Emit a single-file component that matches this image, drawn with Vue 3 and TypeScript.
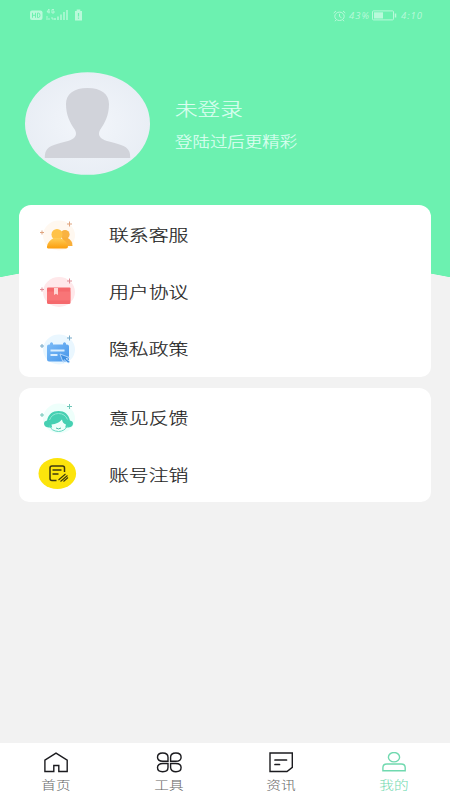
<script setup lang="ts">
interface MenuItem {
  label: string
  icon: 'service' | 'terms' | 'privacy' | 'feedback' | 'cancel'
}
interface Tab {
  label: string
  icon: 'home' | 'tools' | 'news' | 'me'
}

const groups: MenuItem[][] = [
  [
    { label: '联系客服', icon: 'service' },
    { label: '用户协议', icon: 'terms' },
    { label: '隐私政策', icon: 'privacy' },
  ],
  [
    { label: '意见反馈', icon: 'feedback' },
    { label: '账号注销', icon: 'cancel' },
  ],
]
const tabs: Tab[] = [
  { label: '首页', icon: 'home' },
  { label: '工具', icon: 'tools' },
  { label: '资讯', icon: 'news' },
  { label: '我的', icon: 'me' },
]
const active = 'me'
</script>

<template>
  <div class="screen">
    <header class="status">
      <svg class="status-left" width="56" height="14" viewBox="0 0 56 14">
        <rect x="0" y="2.500" width="12.500" height="9.500" rx="2" fill="currentColor" />
        <path d="M2.500 4.800v5M5.500 4.800v5M2.500 7.300h3M7.500 5v4.600h.8q1.700 0 1.700-2.300T8.300 5z" fill="none" stroke="#6cf1b0" />
        <path d="M19 1l-2 3h3M19 1v4.500M24 1.500h-2v3.500h2v-2h-1M17 8v4M19 10v2M21 10h2v2" fill="none" stroke="currentColor" stroke-width=".9" />
        <path d="M25 12v-2M28 12V8.500M31 12V6.500M34 12V4M37 12V2" stroke="currentColor" stroke-width="1.400" />
        <path d="M45 3h1.700V1.500h3.600V3H52v9.500h-7z" fill="currentColor" />
        <path d="M48.500 5v3.500M48.500 9.500v1.200" stroke="#6cf1b0" stroke-width="1.200" />
      </svg>
      <div class="status-right">
        <svg width="13" height="12" viewBox="0 0 13 12" fill="none" stroke="currentColor">
          <ellipse cx="6.500" cy="6.300" rx="4.700" ry="4.200" />
          <path d="M6.500 3.800v2.700l2 1.200M.7 3l2.300-2M12.300 3L10 1M3 10l-1 1.200M10 10l1 1.200" />
        </svg>
        <span class="pct">43%</span>
        <svg class="battery" width="25" height="11" viewBox="0 0 25 11">
          <rect x=".5" y=".9" width="21" height="9" rx="1" fill="none" stroke="currentColor" />
          <rect x="2" y="2.300" width="9" height="6.200" fill="currentColor" />
          <path d="M23.500 3.500v4" stroke="currentColor" stroke-width="1.500" />
        </svg>
        <span class="clock">4:10</span>
      </div>
    </header>

    <section class="profile">
      <svg class="avatar" width="125" height="103" viewBox="0 0 125 103">
        <defs>
          <radialGradient id="avatarBg">
            <stop offset="0" stop-color="#f3f6fb" />
            <stop offset="1" stop-color="#e9eef5" />
          </radialGradient>
        </defs>
        <ellipse cx="62.500" cy="51.500" rx="62.500" ry="51.300" fill="url(#avatarBg)" />
        <path d="M62.500 16C49 16 41 22 41 32c0 11 4 19 9 26 3 6-1 9-7 11-11 3-19 4-22 10-1 2-1.200 4-1.200 7h85.400c0-3-.2-5-1.200-7-3-6-11-7-22-10-6-2-10-5-7-11 5-7 9-15 9-26 0-10-8-16-21.500-16z" fill="#d1d3da" />
      </svg>
      <div class="who">
        <h1 class="wide">未登录</h1>
        <p class="wide">登陆过后更精彩</p>
      </div>
    </section>

    <main class="groups">
      <ul v-for="(group, i) in groups" :key="i" class="card">
        <li v-for="item in group" :key="item.label" class="row">
          <svg v-if="item.icon === 'service'" width="44" height="36" viewBox="0 -2.500 44 36">
            <defs>
              <linearGradient id="people" x2="0" y2="1"><stop stop-color="#ffce58" /><stop offset="1" stop-color="#fb9d0d" /></linearGradient>
            </defs>
            <ellipse cx="24" cy="17" rx="16" ry="15" fill="#fff8f0" />
            <circle cx="30" cy="16" r="4.600" fill="#f9b241" />
            <path d="M27 19h5q6 3 5.500 8.500H29z" fill="#f9ae38" />
            <circle cx="22" cy="16" r="5.500" fill="#ffc247" />
            <path d="M19 19.500h6q7 2.500 8 8.500 0 2-2 2H14q-2.500 0-2-2 1-6 7-8.500z" fill="url(#people)" />
            <path d="M34.500 3v5M32 5.500h5M7 12v4M5 14h4" stroke="#dfa47e" />
          </svg>
          <svg v-else-if="item.icon === 'terms'" width="44" height="36" viewBox="0 -2.500 44 36">
            <ellipse cx="24" cy="16.500" rx="16" ry="15" fill="#ffe8ea" />
            <path d="M12 13q0-1 1-1h21.500q1 0 1 1v14q0 1.500-1.500 1.500H13.500q-1.500 0-1.500-1.500z" fill="#f5696c" />
            <path d="M12 16h23.500v9H12z" fill="#fb8181" opacity=".5" />
            <path d="M19 12.500h4v7l-2-1.200-2 1.200z" fill="#ffd5d3" />
            <path d="M34.500 3v5M32 5.500h5M7 12v4M5 14h4" stroke="#df8d96" />
          </svg>
          <svg v-else-if="item.icon === 'privacy'" width="44" height="36" viewBox="0 -2.500 44 36">
            <defs>
              <linearGradient id="calendar" x2="1" y2="1"><stop stop-color="#7fbdf8" /><stop offset="1" stop-color="#4595e9" /></linearGradient>
            </defs>
            <ellipse cx="24" cy="17" rx="16" ry="15" fill="#eaf7ff" />
            <path d="M12 14q0-2 2-2h1v-1q1.500-2.500 3 0v1h10v-1q1.500-2.500 3 0v1h1q2 0 2 2v13q0 2-2 2H14q-2 0-2-2z" fill="url(#calendar)" />
            <path d="M15.500 18h14M15.500 22.500h7" stroke="#d8edff" stroke-width="2" />
            <path d="M25 21.500l9.500 3.500-3.500 1.200 4 3-1.800 1.300-4-3.300-1 2.800z" fill="#3f8fe0" stroke="#c6e2ff" stroke-width=".8" />
            <path d="M34.500 3v5M32 5.500h5M7 11.500v4M5 13.500h4" stroke="#75a9c9" />
          </svg>
          <svg v-else-if="item.icon === 'feedback'" width="44" height="36" viewBox="0 -2.500 44 36">
            <ellipse cx="24" cy="17" rx="16" ry="15" fill="#eefffb" />
            <path d="M9 22q0-2.500 3-3C13.500 12.500 17.500 9.500 23.500 9.500S33.500 12.500 35 19q3 .5 3 3 0 3.500-4.500 4h-20Q9 25.500 9 22z" fill="#46d0b2" />
            <path d="M14.500 18.500q2.500-6.500 9-6.500t9 6" fill="none" stroke="#8ee8d4" />
            <path d="M16.500 23q6.500-.5 10.500-5 .5 4 4 5-1 7-7.500 7t-7-7z" fill="#effffa" />
            <path d="M14.500 24q1.500 5.500 9 6 6-.2 9-5.500" fill="none" stroke="#64d7c0" />
            <path d="M21 26.500q2.500 1.800 5 0" fill="none" stroke="#4abda4" />
            <path d="M34.500 2.500v5M32 5h5M7 11.500v4M5 13.500h4" stroke="#6fc7b8" />
          </svg>
          <svg v-else width="44" height="36" viewBox="0 0 44 36" fill="none">
            <ellipse cx="22.300" cy="17.500" rx="18.800" ry="15.500" fill="#fce40c" />
            <path d="M21.500 24.500H17q-2 0-2-2V12q0-2 2-2h10.500q2 0 2 2v4" stroke="#3c3810" stroke-width="1.500" />
            <path d="M17.500 14h9M17.500 18h6" stroke="#3c3810" stroke-width="1.500" />
            <path d="M23.500 24l7-6M25.500 25.500l7-6M28.500 25.500l4.500-4" stroke="#3c3810" stroke-width="1.100" />
          </svg>
          <span class="wide">{{ item.label }}</span>
        </li>
      </ul>
    </main>

    <nav class="tabs">
      <div v-for="tab in tabs" :key="tab.icon" class="tab" :class="{ active: tab.icon === active }">
        <svg width="26" height="22" viewBox="0 0 26 22" fill="none" stroke="currentColor" stroke-width="1.400">
          <path v-if="tab.icon === 'home'" d="M1.900 8.200L13 1.200l11.200 7v11.300h-8.400v-6h-5v6H1.900z" />
          <template v-else-if="tab.icon === 'tools'">
            <path d="M12 9.300H6.800C3.500 9.300 1.500 7.600 1.500 5.200S3.500 1 6.700 1 12 2.800 12 5.200zM14.600 9.300h5.200c3.300 0 5.300-1.700 5.300-4.100S23.100 1 19.900 1s-5.300 1.800-5.300 4.200zM12 11.500H6.800c-3.300 0-5.300 1.700-5.300 4.100s2 4.200 5.200 4.200S12 18 12 15.600zM14.600 11.500h5.200c3.300 0 5.300 1.700 5.300 4.100s-2 4.200-5.200 4.200-5.300-1.800-5.300-4.200z" />
          </template>
          <template v-else-if="tab.icon === 'news'">
            <path d="M2 1h22.300v14.300l-5.300 4.200H2z" />
            <path d="M7 8h11.500M7 12.500h4.500" stroke-width="1.700" stroke-linecap="round" />
          </template>
          <template v-else>
            <ellipse cx="13" cy="5.200" rx="5.600" ry="4.700" />
            <path d="M1.900 18.700v-3c0-2.400 1.500-3.700 4-3.700h14.200c2.600 0 4.100 1.300 4.100 3.700v3z" />
          </template>
        </svg>
        <span class="wide">{{ tab.label }}</span>
      </div>
    </nav>
  </div>
</template>

<style>
body {
  margin: 0;
}
</style>

<style scoped>
.screen {
  display: flex;
  flex-direction: column;
  box-sizing: border-box;
  width: 450px;
  height: 800px;
  overflow: hidden;
  font-family: "Noto Sans CJK SC", sans-serif;
  font-weight: 300;
  background:
    radial-gradient(ellipse 450px 156px at 225px 412px, #f2f2f2 99.600%, transparent 100%),
    linear-gradient(#6cf1b0 277px, #f2f2f2 277px);
}
/* Glyphs are drawn wider than tall throughout the app. */
.wide {
  transform: scaleX(1.22);
  transform-origin: left center;
  white-space: nowrap;
  -webkit-text-stroke: 0.2px currentColor;
}
.status {
  display: flex;
  justify-content: space-between;
  align-items: center;
  height: 32px;
  box-sizing: border-box;
  padding: 0 28px 1px 30px;
  color: #b9f9da;
}
.status-left {
  margin-top: -1px;
}
.status-right {
  display: flex;
  align-items: center;
  font: italic 9.500px/12px "Open Sans", sans-serif;
  letter-spacing: 1px;
}
.pct {
  width: 22px;
  margin-left: 3px;
}
.battery {
  margin: 0 4px 0 1px;
}
.clock {
  width: 21px;
}
.profile {
  display: flex;
  height: 173px;
  box-sizing: border-box;
  padding: 40px 0 0 25px;
}
.who {
  margin: 22px 0 0 25px;
  color: #dcfff0;
}
.who h1 {
  margin: 0;
  font-size: 18.500px;
  line-height: 28px;
  font-weight: 300;
}
.who p {
  margin: 8px 0 0;
  font-size: 14.300px;
  line-height: 22px;
}
.groups {
  flex: 1;
  display: flex;
  flex-direction: column;
  gap: 11px;
  padding: 0 19px;
}
.card {
  margin: 0;
  padding: 0;
  list-style: none;
  background: #fff;
  border-radius: 12px 12px 10px 10px;
}
.row {
  display: flex;
  align-items: center;
  height: 57.300px;
  padding-left: 16px;
  color: #1c1c1c;
  font-size: 16.300px;
}
.row svg {
  margin-right: 30px;
}
.tabs {
  display: grid;
  grid-template-columns: repeat(4, 1fr);
  height: 57px;
  background: #fff;
}
.tab {
  display: flex;
  flex-direction: column;
  align-items: center;
  padding-top: 9px;
  color: #1b1b1f;
}
.tab .wide {
  transform-origin: center;
  margin-top: 2px;
  font-size: 12px;
  line-height: 18px;
  color: #666;
  -webkit-text-stroke-width: 0;
}
.tab.active,
.tab.active .wide {
  color: #70d9af;
}
</style>
